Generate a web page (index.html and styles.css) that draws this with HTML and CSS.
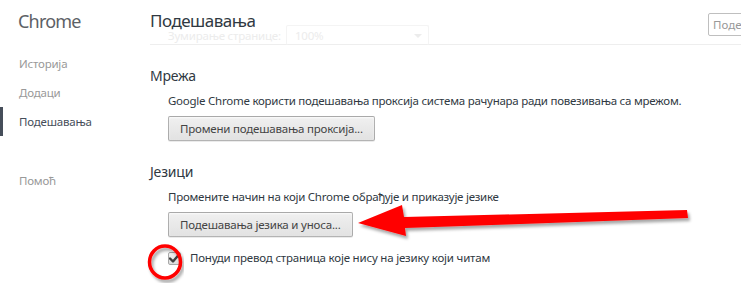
FILE: index.html
```html
<!DOCTYPE html>
<html lang="sr">

<head>
    <meta charset="UTF-8">
    <meta name="viewport" content="width=device-width, initial-scale=1.0">
    <title>Подешавања</title>
    <link rel="stylesheet" href="styles.css">
</head>

<body>
    <div class="page">
        <nav class="sidebar">
            <h1 class="brand">Chrome</h1>
            <ul class="menu">
                <li class="menu-item">Историја</li>
                <li class="menu-item">Додаци</li>
                <li class="menu-item selected">Подешавања</li>
                <li class="menu-item help">Помоћ</li>
            </ul>
        </nav>

        <main class="content">
            <header class="top">
                <h2 class="title">Подешавања</h2>
                <input class="search" type="search" placeholder="Подешавања за претрагу">
                <!-- ред који се губи испод заглавља при скроловању -->
                <div class="zoom-row">
                    <span>Зумирање странице:</span>
                    <span class="zoom-select">100%<span class="caret"></span></span>
                </div>
            </header>

            <section class="group">
                <h3 class="group-title">Мрежа</h3>
                <p class="group-text">Google Chrome користи подешавања проксија система рачунара ради повезивања са мрежом.</p>
                <button class="btn">Промени подешавања проксија...</button>
            </section>

            <section class="group">
                <h3 class="group-title">Језици</h3>
                <p class="group-text">Промените начин на који Chrome обрађује и приказује језике</p>
                <button class="btn">Подешавања језика и уноса...</button>
                <label class="check">
                    <span class="box">
                        <svg width="11" height="10" viewBox="0 0 11 10">
                            <path d="M1 5.5 L4 8.5 L10 1.5" fill="none" stroke="#404040" stroke-width="2.4" stroke-linecap="round" stroke-linejoin="round"/>
                        </svg>
                    </span>
                    Понуди превод страница које нису на језику који читам
                </label>
            </section>
        </main>
    </div>

    <!-- цртане ознаке преко снимка -->
    <svg class="marks" width="741" height="283" viewBox="0 0 741 283">
        <defs>
            <filter id="shade" x="-10%" y="-50%" width="120%" height="200%">
                <feDropShadow dx="2" dy="3" stdDeviation="1.6" flood-color="#000" flood-opacity="0.35"/>
            </filter>
        </defs>
        <polygon points="358,223 402,205 404,217 687,210 688,218 405,228 406,236" fill="#ff0000" filter="url(#shade)"/>
        <ellipse cx="165" cy="262" rx="15.5" ry="16" fill="none" stroke="#ff0000" stroke-width="3.5" filter="url(#shade)"/>
    </svg>
</body>

</html>
```

FILE: styles.css
```css
* {
    margin: 0;
    padding: 0;
    box-sizing: border-box;
}

body {
    width: 741px;
    height: 283px;
    overflow: hidden;
    background: #fff;
    font-family: "Noto Sans", "Open Sans", sans-serif;
    color: #303942;
    position: relative;
}

.page {
    display: flex;
    height: 100%;
}

.sidebar {
    width: 150px;
    flex-shrink: 0;
    padding-top: 9px;
}

.brand {
    font-size: 18px;
    font-weight: normal;
    line-height: 24px;
    letter-spacing: -0.8px;
    color: #5c6166;
    padding-left: 18px;
}

.menu {
    list-style: none;
    margin-top: 16px;
}

.menu-item {
    font-size: 11.5px;
    letter-spacing: -0.2px;
    line-height: 29px;
    color: #999;
    border-left: 3px solid transparent;
    padding-left: 16px;
}

.menu-item.selected {
    color: #464e5a;
    border-left-color: #464e5a;
}

.menu-item.help {
    margin-top: 30px;
}

.content {
    flex: 1;
    min-width: 0;
}

.top {
    position: relative;
    height: 45px;
    border-bottom: 1px solid #eeeeee;
    display: flex;
    align-items: flex-start;
    justify-content: space-between;
    padding-top: 9px;
}

.title {
    font-size: 17px;
    font-weight: normal;
    line-height: 24px;
    letter-spacing: -0.5px;
    color: #303942;
    position: relative;
    z-index: 1;
}

.search {
    width: 60px;
    height: 23px;
    margin-top: 4px;
    margin-right: -27px;
    border: 1px solid #bfbfbf;
    border-radius: 2px;
    padding-left: 4px;
    font-family: inherit;
    font-size: 11.5px;
    outline: none;
}

.search::placeholder {
    color: #999;
}

.zoom-row {
    position: absolute;
    left: 18px;
    top: 25px;
    display: flex;
    align-items: center;
    gap: 5px;
    font-size: 11.5px;
    letter-spacing: -0.2px;
    color: #ececec;
}

.zoom-select {
    position: relative;
    width: 143px;
    height: 20px;
    border: 1px solid #f4f4f4;
    border-bottom: none;
    border-radius: 2px;
    padding-left: 8px;
    line-height: 19px;
}

.caret {
    position: absolute;
    right: 6px;
    top: 8px;
    border: 4px solid transparent;
    border-top-color: #ececec;
}

.group {
    padding-top: 21px;
}

.group-title {
    font-size: 14px;
    font-weight: normal;
    line-height: 20px;
    letter-spacing: -0.2px;
}

.group-text {
    font-size: 11.5px;
    letter-spacing: -0.25px;
    line-height: 18px;
    margin: 6px 0 0 18px;
}

.btn {
    display: block;
    height: 25px;
    margin: 6px 0 0 18px;
    padding: 0 11px;
    font-family: inherit;
    font-size: 11.5px;
    letter-spacing: -0.2px;
    color: #444;
    background: linear-gradient(#f0f0f0, #e2e2e2);
    border: 1px solid rgba(0, 0, 0, .25);
    border-radius: 2px;
    box-shadow: 0 1px 0 rgba(0, 0, 0, .08), inset 0 1px 2px rgba(255, 255, 255, .75);
}

.check {
    display: flex;
    align-items: center;
    gap: 9px;
    margin: 11px 0 0 18px;
    font-size: 11.5px;
    letter-spacing: -0.2px;
    line-height: 20px;
}

.box {
    width: 13px;
    height: 13px;
    border: 1px solid #a8a8a8;
    border-radius: 2px;
    background: linear-gradient(#f4f4f4, #dcdcdc);
    display: flex;
    align-items: center;
    justify-content: center;
}

.marks {
    position: absolute;
    top: 0;
    left: 0;
    pointer-events: none;
}
```
